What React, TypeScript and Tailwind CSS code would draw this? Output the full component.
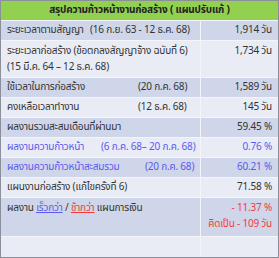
function Row({
  children,
  value,
  dark,
  h = 'h-[19px]',
}: {
  children: React.ReactNode;
  value: React.ReactNode;
  dark: boolean;
  h?: string;
}) {
  const bg = dark ? 'bg-[#d0d6e9]' : 'bg-[#e9ecf5]';
  return (
    <>
      <div className={`${bg} ${h} pl-[6px] flex flex-col justify-center whitespace-nowrap overflow-hidden`}>
        {children}
      </div>
      <div className={`${bg} ${h} pr-[6px] flex flex-col justify-center items-end whitespace-nowrap`}>
        {value}
      </div>
    </>
  );
}

export default function App() {
  return (
    <div
      className="w-[279px] h-[258px] border border-[#8a8f99] bg-[#f4f5f9] text-[#333] text-[10px] leading-[13px] tracking-[-0.2px] overflow-hidden"
      style={{ fontFamily: 'Tahoma, "Noto Sans Thai", "Noto Sans", "DejaVu Sans", sans-serif' }}
    >
      <div className="grid grid-cols-[199px_1fr] gap-px">
        <div className="col-span-2 h-[19px] bg-[#92d050] flex items-center justify-center font-bold text-[#222]">
          สรุปความก้าวหน้างานก่อสร้าง ( แผนปรับแก้ )
        </div>

        <Row dark value={<span>1,914 วัน</span>}>
          <div className="flex">
            <span className="min-w-[79px] mr-[4px]">ระยะเวลาตามสัญญา</span>
            <span>(16 ก.ย. 63 - 12 ธ.ค. 68)</span>
          </div>
        </Row>

        <Row
          dark={false}
          h="h-[36px]"
          value={<span className="mb-auto mt-[4px]">1,734 วัน</span>}
        >
          <div>ระยะเวลาก่อสร้าง (ข้อตกลงสัญญาจ้าง ฉบับที่ 6)</div>
          <div className="mt-[3px]">(15 มี.ค. 64 – 12 ธ.ค. 68)</div>
        </Row>

        <Row dark value={<span>1,589 วัน</span>}>
          <div className="flex">
            <span className="min-w-[127px] mr-[4px]">ใช้เวลาในการก่อสร้าง</span>
            <span>(20 ก.ค. 68)</span>
          </div>
        </Row>

        <Row dark={false} value={<span>145 วัน</span>}>
          <div className="flex">
            <span className="min-w-[127px] mr-[4px]">คงเหลือเวลาทำงาน</span>
            <span>(12 ธ.ค. 68)</span>
          </div>
        </Row>

        <Row dark value={<span>59.45 %</span>}>
          <span>ผลงานรวมสะสมเดือนที่ผ่านมา</span>
        </Row>

        <Row dark={false} value={<span className="text-[#5a5af0]">0.76 %</span>}>
          <div className="flex text-[#5a5af0]">
            <span className="min-w-[90px] mr-[4px]">ผลงานความก้าวหน้า</span>
            <span>(6 ก.ค. 68– 20 ก.ค. 68)</span>
          </div>
        </Row>

        <Row dark value={<span className="text-[#5a5af0]">60.21 %</span>}>
          <div className="flex text-[#5a5af0]">
            <span className="min-w-[134px] mr-[4px]">ผลงานความก้าวหน้าสะสมรวม</span>
            <span>(20 ก.ค. 68)</span>
          </div>
        </Row>

        <Row dark={false} value={<span>71.58 %</span>}>
          <span>แผนงานก่อสร้าง (แก้ไขครั้งที่ 6)</span>
        </Row>

        <Row
          dark
          h="h-[38px]"
          value={
            <div className="flex flex-col items-end text-[#f03c3c] pt-[4px] gap-[3px] h-full">
              <span>- 11.37 %</span>
              <span>คิดเป็น - 109 วัน</span>
            </div>
          }
        >
          <div className="mb-auto mt-[4px]">
            ผลงาน <span className="text-[#5a5af0] underline">เร็วกว่า</span> /{' '}
            <span className="text-[#f03c3c] underline">ช้ากว่า</span> แผนการเงิน
          </div>
        </Row>

        <Row dark={false} h="h-[20px]" value={null}>
          {null}
        </Row>
      </div>
    </div>
  );
}
